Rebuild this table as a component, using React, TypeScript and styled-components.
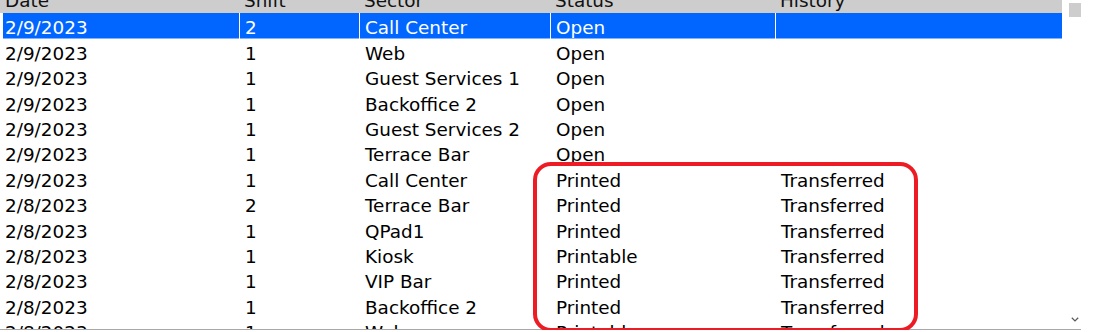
import styled, { createGlobalStyle } from "styled-components";

const GlobalStyle = createGlobalStyle`
  html, body {
    margin: 0;
    padding: 0;
    background: #ffffff;
  }
  body {
    font-family: "DejaVu Sans", Verdana, sans-serif;
    overflow: hidden;
  }
`;

type Row = {
  date: string;
  shift: string;
  sector: string;
  status: string;
  history: string;
};

const rows: Row[] = [
  { date: "2/9/2023", shift: "2", sector: "Call Center", status: "Open", history: "" },
  { date: "2/9/2023", shift: "1", sector: "Web", status: "Open", history: "" },
  { date: "2/9/2023", shift: "1", sector: "Guest Services 1", status: "Open", history: "" },
  { date: "2/9/2023", shift: "1", sector: "Backoffice 2", status: "Open", history: "" },
  { date: "2/9/2023", shift: "1", sector: "Guest Services 2", status: "Open", history: "" },
  { date: "2/9/2023", shift: "1", sector: "Terrace Bar", status: "Open", history: "" },
  { date: "2/9/2023", shift: "1", sector: "Call Center", status: "Printed", history: "Transferred" },
  { date: "2/8/2023", shift: "2", sector: "Terrace Bar", status: "Printed", history: "Transferred" },
  { date: "2/8/2023", shift: "1", sector: "QPad1", status: "Printed", history: "Transferred" },
  { date: "2/8/2023", shift: "1", sector: "Kiosk", status: "Printable", history: "Transferred" },
  { date: "2/8/2023", shift: "1", sector: "VIP Bar", status: "Printed", history: "Transferred" },
  { date: "2/8/2023", shift: "1", sector: "Backoffice 2", status: "Printed", history: "Transferred" },
  { date: "2/8/2023", shift: "1", sector: "Web", status: "Printable", history: "Transferred" },
];

export default function App() {
  return (
    <>
      <GlobalStyle />
      <Frame>
        <ListClip>
          <Table>
            <HeaderRow>
              <HeadCell>Date</HeadCell>
              <HeadCell>Shift</HeadCell>
              <HeadCell>Sector</HeadCell>
              <HeadCell>Status</HeadCell>
              <HeadCell>History</HeadCell>
            </HeaderRow>
            {rows.map((r, i) => (
              <DataRow key={i} $selected={i === 0}>
                <Cell $first>{r.date}</Cell>
                <Cell>{r.shift}</Cell>
                <Cell>{r.sector}</Cell>
                <Cell>{r.status}</Cell>
                <Cell>{r.history}</Cell>
              </DataRow>
            ))}
          </Table>
        </ListClip>
        <ScrollTrack>
          <Thumb />
          <ArrowDown viewBox="0 0 8 5">
            <path d="M0.8 0.8 L4 3.9 L7.2 0.8" fill="none" stroke="#5a5a5a" strokeWidth="1.3" />
          </ArrowDown>
        </ScrollTrack>
        <Highlight />
      </Frame>
    </>
  );
}

const Frame = styled.div`
  position: relative;
  display: flex;
  width: 1081px;
  height: 329px;
  border-bottom: 1px solid #a8a8a8;
`;

const ListClip = styled.div`
  width: 1062px;
  height: 100%;
  overflow: hidden;
`;

const Table = styled.div`
  margin-top: -12px;
  font-size: 18.4px;
`;

const HeaderRow = styled.div`
  display: grid;
  grid-template-columns: 239px 120px 191px 225px 287px;
  height: 25.4px;
  line-height: 25.4px;
  background: #cdcdcd;
  color: #111111;
`;

const HeadCell = styled.div`
  padding-left: 5px;
  white-space: nowrap;
`;

const DataRow = styled.div<{ $selected?: boolean }>`
  display: grid;
  grid-template-columns: 236px 120px 191px 225px 287px;
  margin-left: 3px;
  height: 25.4px;
  box-sizing: border-box;
  color: ${(p) => (p.$selected ? "#ffffff" : "#000000")};
  background: ${(p) => (p.$selected ? "#0066ff" : "transparent")};
  border-bottom: ${(p) => (p.$selected ? "1px solid #80b3ff" : "none")};
`;

const Cell = styled.div<{ $first?: boolean }>`
  white-space: nowrap;
  padding-top: 4px;
  line-height: 21.4px;
  padding-left: ${(p) => (p.$first ? "2px" : "5px")};
  border-left: ${(p) => (p.$first ? "none" : "1px solid #ffffff")};
`;

const ScrollTrack = styled.div`
  flex: 1;
  display: flex;
  flex-direction: column;
  align-items: flex-end;
  justify-content: space-between;
  padding: 3px 0 7px;
`;

const Thumb = styled.div`
  width: 12px;
  height: 14px;
  background: #cdcdcd;
`;

const ArrowDown = styled.svg`
  width: 8px;
  height: 5px;
  margin-right: 2px;
`;

const Highlight = styled.div`
  position: absolute;
  left: 533px;
  top: 162px;
  width: 385px;
  height: 170px;
  box-sizing: border-box;
  border: 4px solid #ed1c24;
  border-radius: 18px;
  pointer-events: none;
`;
